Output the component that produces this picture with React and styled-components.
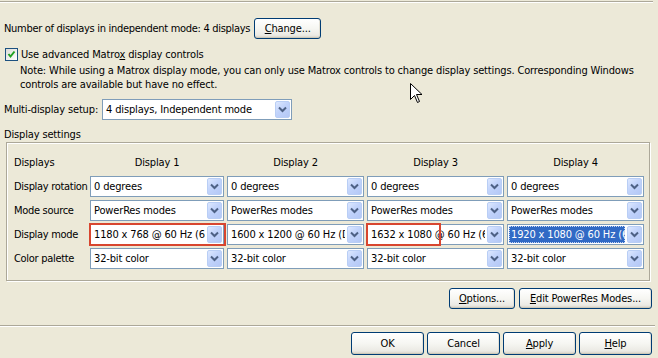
import React from 'react';
import styled, { createGlobalStyle } from 'styled-components';

const GlobalStyle = createGlobalStyle`
  html, body {
    margin: 0;
    padding: 0;
    background: #ece9d8;
  }
  body {
    font-family: "DejaVu Sans Condensed", "Liberation Sans", Arial, sans-serif;
    font-size: 11px;
    letter-spacing: -0.15px;
    color: #000;
  }
`;

const Page = styled.div`
  position: relative;
  width: 658px;
  height: 358px;
  overflow: hidden;
  background: #ece9d8;
  box-sizing: border-box;
`;

const TopRule = styled.div`
  width: 653px;
  height: 1px;
  margin-top: 1px;
  background: #aca899;
  box-shadow: 0 1px 0 #fff;
`;

const Row = styled.div`
  display: flex;
  align-items: center;
  gap: ${(p) => p.gap || 4}px;
  padding-left: ${(p) => p.indent || 4}px;
  margin-top: ${(p) => p.top || 0}px;
  height: ${(p) => p.h || 21}px;
  white-space: nowrap;
`;

const Text = styled.span`
  letter-spacing: ${(p) => (p.tight ? '-0.3px' : 'inherit')};
`;

const Button = styled.button`
  font: inherit;
  letter-spacing: inherit;
  color: #000;
  width: ${(p) => p.w || 73}px;
  height: ${(p) => p.h || 23}px;
  padding: 0;
  border: 1px solid #003c74;
  border-radius: 3px;
  background: linear-gradient(#ffffff 0%, #f6f6f2 50%, #ebeae4 85%, #d6d0c5 100%);
  box-shadow: inset 0 -1px 0 #cdc9b8, inset -1px 0 0 #e4e1d6;
  flex: none;
  white-space: nowrap;
  u { text-decoration: underline; }
`;

const Check = styled.span`
  width: 11px;
  height: 11px;
  border: 1px solid #1c5180;
  background: linear-gradient(135deg, #dcdcd7, #ffffff);
  display: inline-flex;
  align-items: center;
  justify-content: center;
  flex: none;
`;

const Note = styled.div`
  padding-left: 20px;
  margin-top: 3px;
  line-height: 14px;
  white-space: nowrap;
`;

const Combo = styled.div`
  display: flex;
  align-items: center;
  width: ${(p) => p.w}px;
  height: 21px;
  box-sizing: border-box;
  border: 1px solid #7f9db9;
  background: #fff;
  padding: 1px;
  flex: none;
`;

const ComboText = styled.div`
  flex: 1;
  min-width: 0;
  height: 17px;
  line-height: 17px;
  padding-left: 2px;
  white-space: nowrap;
  overflow: hidden;
  margin-right: 2px;
  color: ${(p) => (p.selected ? '#fff' : '#000')};
  background: ${(p) => (p.selected ? '#316ac5' : 'transparent')};
  outline: ${(p) => (p.selected ? '1px dotted #c5d6f3' : 'none')};
  outline-offset: -1px;
`;

const Arrow = styled.div`
  width: 15px;
  height: 17px;
  flex: none;
  box-sizing: border-box;
  border: 1px solid #b9cef5;
  border-radius: 2px;
  background: linear-gradient(135deg, #dde8ff 0%, #c1d3fb 45%, #b4c8f6 100%);
  display: flex;
  align-items: center;
  justify-content: center;
`;

const Caption = styled.div`
  padding-left: 4px;
  margin-top: 8px;
  height: 13px;
  line-height: 13px;
`;

const Group = styled.div`
  margin: 1px 0 0 6px;
  width: 644px;
  height: 139px;
  box-sizing: border-box;
  border: 1px solid #aca899;
  box-shadow: inset 1px 1px 0 #fff, 1px 1px 0 #fff;
  padding: 9px 0 0 7px;
`;

const Grid = styled.div`
  display: grid;
  grid-template-columns: 73px 134px 137px 137px 137px;
  grid-auto-rows: 21px;
  column-gap: 3px;
  row-gap: 3px;
  align-items: center;
  white-space: nowrap;
`;

const HeadCell = styled.div`
  text-align: ${(p) => (p.center ? 'center' : 'left')};
  height: 14px;
  line-height: 14px;
`;

const RowLabel = styled.div`
  letter-spacing: -0.3px;
`;

const Marked = styled.div`
  position: relative;
  &::after {
    content: '';
    position: absolute;
    left: -1px;
    top: -1px;
    width: ${(p) => p.mark}px;
    height: 23px;
    box-sizing: border-box;
    border: 2px solid #d8462f;
    pointer-events: none;
  }
`;

const ActionRow = styled.div`
  display: flex;
  justify-content: flex-end;
  gap: ${(p) => p.gap || 4}px;
  padding-right: 6px;
  margin-top: ${(p) => p.top}px;
`;

const Separator = styled.div`
  width: 655px;
  height: 1px;
  margin-top: 16px;
  background: #aca899;
  box-shadow: 0 1px 0 #fff;
`;

const Cursor = styled.svg`
  position: absolute;
  left: 410px;
  top: 83px;
`;

const Chevron = () => (
  <svg width="9" height="7" viewBox="0 0 9 7">
    <path d="M1 1.5 L4.5 5 L8 1.5" fill="none" stroke="#4d6185" strokeWidth="2" />
  </svg>
);

const Select = ({ w, value, selected }) => (
  <Combo w={w}>
    <ComboText selected={selected}>{value}</ComboText>
    <Arrow>
      <Chevron />
    </Arrow>
  </Combo>
);

const rows = [
  ['Display rotation', ['0 degrees', '0 degrees', '0 degrees', '0 degrees']],
  ['Mode source', ['PowerRes modes', 'PowerRes modes', 'PowerRes modes', 'PowerRes modes']],
  [
    'Display mode',
    [
      '1180 x 768 @ 60 Hz (60 Hz)',
      '1600 x 1200 @ 60 Hz (Default)',
      '1632 x 1080 @ 60 Hz (60 Hz)',
      '1920 x 1080 @ 60 Hz (60 Hz)',
    ],
  ],
  ['Color palette', ['32-bit color', '32-bit color', '32-bit color', '32-bit color']],
];

const widths = [134, 137, 137, 137];

export default function App() {
  return (
    <Page>
      <GlobalStyle />
      <TopRule />
      <Row top={16}>
        <Text tight>Number of displays in independent mode: 4 displays</Text>
        <Button w={67} h={21}>
          <u>C</u>hange...
        </Button>
      </Row>
      <Row top={9} h={13} indent={5} gap={3}>
        <Check>
          <svg width="9" height="9" viewBox="0 0 9 9">
            <path d="M1.5 4 L3.5 6.5 L7.5 1.5" fill="none" stroke="#21a121" strokeWidth="2" />
          </svg>
        </Check>
        <Text>
          Use advanced Matro<u>x</u> display controls
        </Text>
      </Row>
      <Note>
        Note: While using a Matrox display mode, you can only use Matrox controls to change display settings. Corresponding Windows
        <br />
        controls are available but have no effect.
      </Note>
      <Row top={7}>
        <Text>Multi-display setup:</Text>
        <Select w={190} value="4 displays, Independent mode" />
      </Row>
      <Caption>Display settings</Caption>
      <Group>
        <Grid>
          <HeadCell>Displays</HeadCell>
          <HeadCell center>Display 1</HeadCell>
          <HeadCell center>Display 2</HeadCell>
          <HeadCell center>Display 3</HeadCell>
          <HeadCell center>Display 4</HeadCell>
          {rows.map(([label, values]) => (
            <React.Fragment key={label}>
              <RowLabel>{label}</RowLabel>
              {values.map((v, i) => {
                const sel = <Select w={widths[i]} value={v} selected={label === 'Display mode' && i === 3} />;
                if (label === 'Display mode' && i === 0) return <Marked key={i} mark={137}>{sel}</Marked>;
                if (label === 'Display mode' && i === 2) return <Marked key={i} mark={75}>{sel}</Marked>;
                return <React.Fragment key={i}>{sel}</React.Fragment>;
              })}
            </React.Fragment>
          ))}
        </Grid>
      </Group>
      <ActionRow top={7}>
        <Button w={66} h={21}>
          <u>O</u>ptions...
        </Button>
        <Button w={133} h={21}>
          <u>E</u>dit PowerRes Modes...
        </Button>
      </ActionRow>
      <Separator />
      <ActionRow top={6} gap={3}>
        <Button>OK</Button>
        <Button>Cancel</Button>
        <Button>
          <u>A</u>pply
        </Button>
        <Button>
          <u>H</u>elp
        </Button>
      </ActionRow>
      <Cursor width="13" height="21" viewBox="0 0 13 21">
        <path d="M0.5 0.5 L0.5 16.5 L4.5 12.5 L7.5 19.5 L9.5 18.5 L6.5 11.5 L12 11.5 Z" fill="#fff" stroke="#000" strokeWidth="1" />
      </Cursor>
    </Page>
  );
}
